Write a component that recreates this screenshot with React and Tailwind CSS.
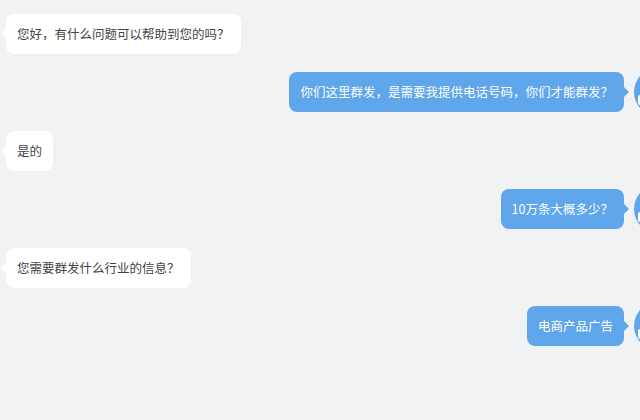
import React from 'react';

const messages = [
  { side: 'left', text: '您好，有什么问题可以帮助到您的吗？' },
  { side: 'right', text: '你们这里群发，是需要我提供电话号码，你们才能群发？' },
  { side: 'left', text: '是的' },
  { side: 'right', text: '10万条大概多少？' },
  { side: 'left', text: '您需要群发什么行业的信息？' },
  { side: 'right', text: '电商产品广告' },
];

function Avatar() {
  return (
    <div className="w-12 h-12 rounded-full flex-shrink-0 flex items-center justify-center bg-[#5fa6ea]">
      <svg width="48" height="48" viewBox="0 0 48 48" fill="none">
        <path d="M9 30 a15 15 0 0 1 30 0" stroke="#fff" strokeWidth="2.5" fill="none" />
        <rect x="4" y="27" width="6" height="10" rx="2" fill="#fff" />
        <rect x="38" y="27" width="6" height="10" rx="2" fill="#fff" />
        <circle cx="24" cy="24" r="7" fill="#fff" />
      </svg>
    </div>
  );
}

function Bubble({ side, text }) {
  const isRight = side === 'right';
  return (
    <div
      className={
        'relative h-10 px-[11px] flex items-center rounded-lg text-[12.5px] leading-5 whitespace-nowrap ' +
        (isRight ? 'bg-[#5fa6ea] text-white' : 'bg-white text-[#444]')
      }
    >
      {isRight ? (
        <span className="absolute -right-[5px] top-1/2 -translate-y-1/2 w-0 h-0 border-y-[5px] border-y-transparent border-l-[5px] border-l-[#5fa6ea]" />
      ) : (
        <span className="absolute -left-[5px] top-1/2 -translate-y-1/2 w-0 h-0 border-y-[5px] border-y-transparent border-r-[5px] border-r-white" />
      )}
      {text}
    </div>
  );
}

export default function App() {
  return (
    <div
      className="w-[640px] h-[420px] bg-[#f1f2f4] overflow-hidden"
      style={{ fontFamily: '"Noto Sans CJK SC", "Liberation Sans", sans-serif' }}
    >
      <div className="w-[734px] ml-[-52px] pt-[10px] flex flex-col gap-[10.4px]">
        {messages.map((m, i) =>
          m.side === 'left' ? (
            <div key={i} className="flex items-center gap-[10px]">
              <Avatar />
              <Bubble side="left" text={m.text} />
            </div>
          ) : (
            <div key={i} className="flex items-center justify-end gap-[10px]">
              <Bubble side="right" text={m.text} />
              <Avatar />
            </div>
          )
        )}
      </div>
    </div>
  );
}
